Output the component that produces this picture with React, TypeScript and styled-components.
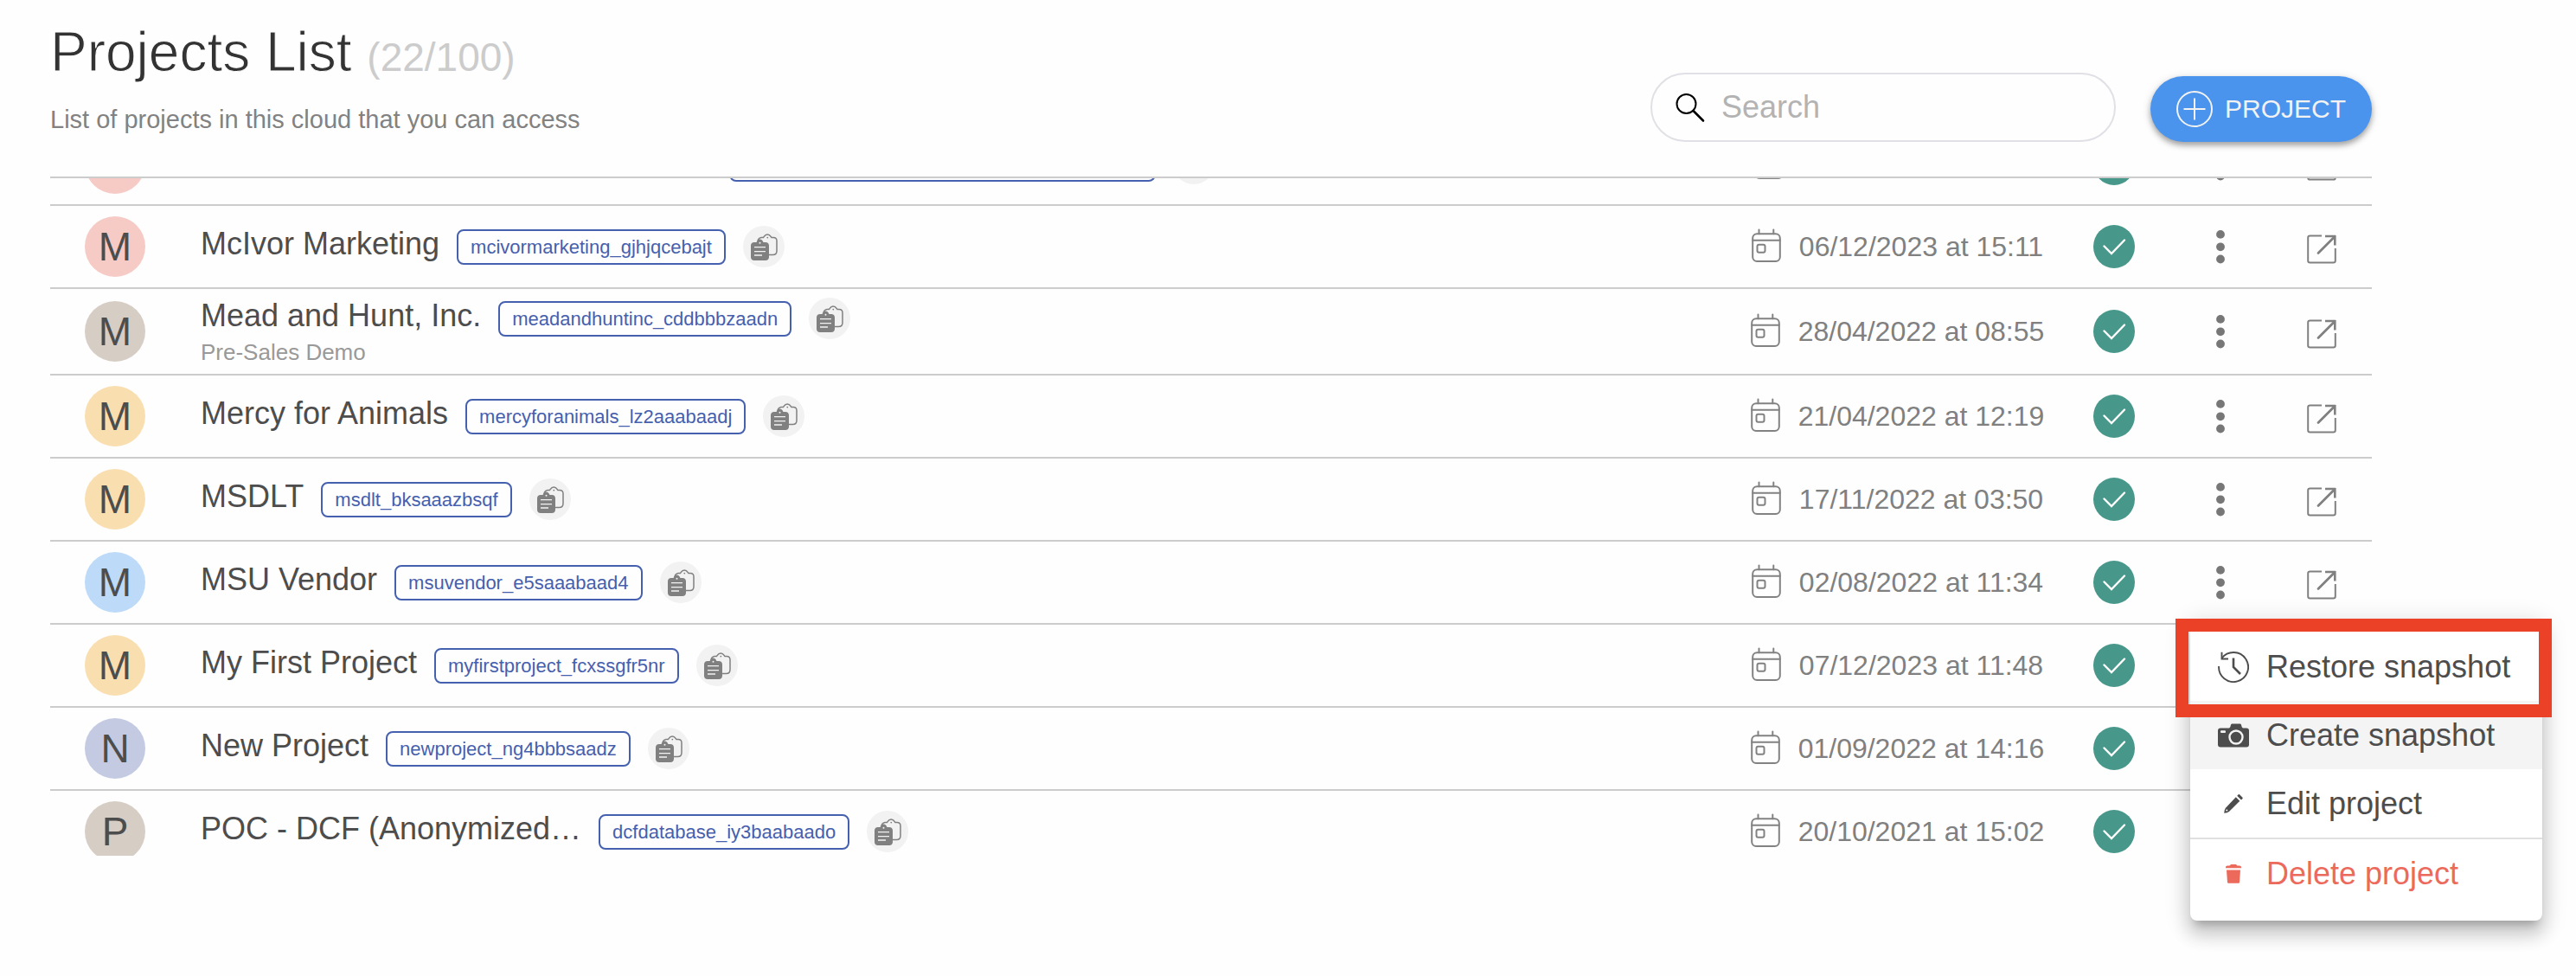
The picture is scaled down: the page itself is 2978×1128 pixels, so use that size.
import React, { useLayoutEffect, useRef } from "react";
import styled, { createGlobalStyle } from "styled-components";

const GlobalStyle = createGlobalStyle`
  *, *::before, *::after { box-sizing: border-box; }
  body {
    margin: 0;
    background: #fefefe;
    color: #4d4d4d;
    font-family: "Liberation Sans", Arial, Helvetica, sans-serif;
  }
  button, input { font: inherit; }
  svg { display: block; }
`;

const Page = styled.main`
  position: relative;
  min-height: 100vh;
  padding: 22px 236px 0 58px;
`;

const Header = styled.header`
  display: flex;
  align-items: flex-end;
  justify-content: space-between;
  padding-bottom: 40px;
`;

const Heading = styled.div`
  display: flex;
  flex-direction: column;
  gap: 14px;
`;

const Title = styled.h1`
  margin: 0;
  color: #333;
  font-size: 64px;
  font-weight: 400;
  line-height: 76px;
  -webkit-text-stroke: 1px #fefefe;
`;

const Count = styled.span`
  color: #ccc;
  font-size: 46px;
  line-height: 1;
  -webkit-text-stroke: 0;
`;

const Subtitle = styled.p`
  margin: 0;
  color: #828282;
  font-size: 29px;
  line-height: 52px;
`;

const Controls = styled.div`
  display: flex;
  align-items: flex-end;
  gap: 40px;
`;

const SearchBox = styled.label`
  display: flex;
  align-items: center;
  gap: 18px;
  width: 538px;
  height: 80px;
  padding: 0 26px;
  border: 2px solid #e0e0e6;
  border-radius: 40px;
`;

const SearchInput = styled.input`
  flex: 1;
  min-width: 0;
  padding: 0;
  border: 0;
  outline: 0;
  background: transparent;
  color: #4d4d4d;
  font-size: 36px;
  line-height: 44px;
  &::placeholder { color: #b3b3b3; opacity: 1; }
`;

const NewProjectButton = styled.button`
  display: flex;
  align-items: center;
  gap: 14px;
  height: 76px;
  padding: 0 30px;
  border: 0;
  border-radius: 38px;
  background: #4a94ee;
  color: #f2f2f2;
  font-size: 30px;
  box-shadow: 0 4px 6px rgba(0, 0, 0, 0.3), 0 2px 12px rgba(0, 0, 0, 0.12);
  cursor: pointer;
`;

const ListViewport = styled.div`
  height: calc(100vh - 343px);
  min-height: 200px;
  border-top: 2px solid #ccc;
  overflow-y: auto;
  scrollbar-width: none;
`;

const Table = styled.table`
  width: 100%;
  table-layout: fixed;
  border-collapse: separate;
  border-spacing: 0;
`;

const Col = styled.col<{ $width?: number }>`
  width: ${(p) => (p.$width ? `${p.$width}px` : "auto")};
`;

const Cell = styled.td`
  padding: 0;
  border-bottom: 2px solid #ccc;
  vertical-align: middle;
`;

const AvatarCell = styled(Cell)`
  padding: 12px 0 12px 40px;
`;

const NameCell = styled(Cell)`
  padding: 10px 0;
`;

const Avatar = styled.div<{ $color: string }>`
  display: flex;
  align-items: center;
  justify-content: center;
  width: 70px;
  height: 70px;
  border-radius: 50%;
  background: ${(p) => p.$color};
  font-size: 46px;
`;

const NameLine = styled.div`
  display: flex;
  align-items: center;
  gap: 20px;
  height: 48px;
`;

const Name = styled.span<{ $width?: number }>`
  width: ${(p) => (p.$width ? `${p.$width}px` : "auto")};
  padding-bottom: 7px;
  font-size: 36px;
  line-height: 41px;
  white-space: nowrap;
`;

const Chip = styled.code<{ $width?: number }>`
  display: flex;
  align-items: center;
  width: ${(p) => (p.$width ? `${p.$width}px` : "auto")};
  height: 41px;
  margin-top: 1px;
  padding: 0 14px;
  border: 2px solid #4560ae;
  border-radius: 8px;
  color: #4560ae;
  font-family: inherit;
  font-size: 22px;
  white-space: nowrap;
`;

const CopyButton = styled.button`
  width: 48px;
  height: 48px;
  padding: 0;
  border: 0;
  border-radius: 50%;
  background: #f2f2f2;
  cursor: pointer;
`;

const Description = styled.div`
  color: #999;
  font-size: 26px;
  line-height: 30px;
`;

const DateGroup = styled.div`
  display: flex;
  align-items: center;
  justify-content: center;
  gap: 21px;
  color: #808080;
`;

const DateText = styled.time`
  min-width: 276px;
  font-size: 32px;
  line-height: 38px;
  white-space: nowrap;
`;

const Center = styled.div`
  display: flex;
  justify-content: center;
`;

const KebabButton = styled.button`
  padding: 0;
  border: 0;
  background: transparent;
  cursor: pointer;
`;

const OpenLink = styled.a`
  padding-top: 6px;
`;

const Menu = styled.div`
  position: absolute;
  top: 715px;
  right: 39px;
  width: 407px;
  padding: 16px 0 15px;
  border-radius: 8px;
  background: #fff;
  box-shadow: 0 10px 10px -6px rgba(0, 0, 0, 0.2),
    0 16px 20px 2px rgba(0, 0, 0, 0.14), 0 6px 28px 4px rgba(0, 0, 0, 0.12);
`;

const MenuItem = styled.button<{ $active?: boolean; $danger?: boolean }>`
  display: flex;
  align-items: center;
  gap: 20px;
  width: 100%;
  height: 79px;
  padding: 0 32px;
  border: 0;
  background: ${(p) => (p.$active ? "#f4f4f4" : "transparent")};
  color: ${(p) => (p.$danger ? "#ec6a5c" : "#4d4d4d")};
  font-size: 36px;
  text-align: left;
  white-space: nowrap;
  cursor: pointer;
`;

const MenuDivider = styled.hr`
  height: 2px;
  margin: 0;
  border: 0;
  background: #e0e0e0;
`;

const Callout = styled.div`
  position: absolute;
  top: 0;
  right: -11px;
  left: -17px;
  height: 114px;
  border: 15px solid #ea4127;
  pointer-events: none;
`;

const SearchIcon = () => (
  <svg width="36" height="36" viewBox="0 0 36 36" fill="none" stroke="#000" strokeLinecap="round" aria-hidden>
    <circle cx="13.5" cy="14" r="11" strokeWidth="2" />
    <path d="M21.5 22 33 33.5" strokeWidth="2.6" />
  </svg>
);

const PlusIcon = () => (
  <svg width="42" height="42" viewBox="0 0 42 42" fill="none" stroke="#f2f2f2" strokeWidth="2" aria-hidden>
    <circle cx="21" cy="21" r="20" />
    <path d="M21 8.5v25M8.5 21h25" />
  </svg>
);

const CopyIcon = () => (
  <svg width="48" height="48" viewBox="0 0 48 48" aria-hidden>
    <path
      d="M17 18.500c0-3 1.500-4.500 4-5h2.500c1-.5 1.200-3.500 4.700-3.500s3.700 3 4.700 3.500H35c2.500 0 4 1.500 4 4V29c0 3-1.500 4.500-4.500 4.500H30"
      fill="none"
      stroke="#808080"
      strokeWidth="1.5"
    />
    <circle cx="28.300" cy="13.600" r=".9" fill="#808080" />
    <path
      d="M13 19h2.500c1-2 2-3.500 4-3.500s3 1.500 4 3.500H26c2.500 0 4 1.500 4 4v13c0 2.500-1.500 4-4 4H13c-2.500 0-4-1.500-4-4V23c0-2.500 1.500-4 4-4z"
      fill="#808080"
    />
    <circle cx="19.500" cy="19.800" r="1" fill="#f2f2f2" />
    <path d="M13 24.700h13M13 29.700h13M13 34h9" stroke="#f2f2f2" strokeWidth="1.300" />
  </svg>
);

const CalendarIcon = () => (
  <svg width="34" height="42" viewBox="0 0 34 42" fill="none" stroke="#828282" strokeWidth="2" strokeLinecap="round" aria-hidden>
    <rect x="1.200" y="6.300" width="31.600" height="31.700" rx="5" />
    <path d="M1.200 13.700h31.600M8.500 1.500v4.800M25.300 1.500v4.800" />
    <rect x="6.500" y="18.800" width="9" height="9" rx="2" />
  </svg>
);

const StatusIcon = () => (
  <svg width="48" height="50" viewBox="0 0 48 50" role="img" aria-label="Active">
    <ellipse cx="24" cy="25" rx="24" ry="25" fill="#47988a" />
    <path d="m12.500 24.500 8.500 8.500L36 17.500" fill="none" stroke="#fff" strokeWidth="2.400" strokeLinecap="round" strokeLinejoin="miter" />
  </svg>
);

const KebabIcon = () => (
  <svg width="10" height="40" viewBox="0 0 10 40" fill="#777" aria-hidden>
    <circle cx="5" cy="5.900" r="4.900" />
    <circle cx="5" cy="20.300" r="4.900" />
    <circle cx="5" cy="34.500" r="4.900" />
  </svg>
);

const OpenIcon = () => (
  <svg width="34" height="34" viewBox="0 0 34 34" fill="none" stroke="#808080" strokeWidth="2" aria-hidden>
    <path d="M17 1.500H3.500c-1.500 0-2.300.8-2.300 2.300v26.500c0 1.500.8 2.300 2.300 2.300h27c1.500 0 2.300-.8 2.300-2.300V16" />
    <path d="M21 2h12M32.300 1v11.500" strokeWidth="2.600" />
    <path d="M13 21.500 31.500 3" strokeWidth="2.800" strokeLinecap="round" />
  </svg>
);

const HistoryIcon = () => (
  <svg width="36" height="36" viewBox="0 0 36 36" fill="none" stroke="currentColor" aria-hidden>
    <path d="M1.100 17A17 17 0 1 0 4.500 7.800" strokeWidth="1.900" />
    <path d="M4.500.8v7.700H12" strokeWidth="1.900" />
    <path d="M18 7.500V18l8 8" strokeWidth="2.600" />
  </svg>
);

const CameraIcon = () => (
  <svg width="36" height="28" viewBox="0 0 36 28" aria-hidden>
    <path
      d="M3 5.500h9.500c1.500 0 2-1.500 2.300-3C15 1 15.500.5 17 .5h8c1.500 0 2 .5 2.200 2 .3 1.500.8 3 2.300 3H33c2 0 3 1 3 3v16c0 2-1 3-3 3H3c-2 0-3-1-3-3v-16c0-2 1-3 3-3z"
      fill="currentColor"
    />
    <circle cx="21" cy="16" r="7.500" fill="none" stroke="#f4f4f4" strokeWidth="2.400" />
    <rect x="3" y="8.300" width="6" height="2.600" rx="1" fill="#f4f4f4" />
  </svg>
);

const PencilIcon = () => (
  <svg width="36" height="36" viewBox="0 0 36 36" fill="currentColor" aria-hidden>
    <path d="m20.800 10.200 4.500 4.500L13.200 26.800c-1.500 1.300-3.300 1.800-6 1.900.2-2.700.8-4.800 2-6.300z" />
    <path d="m22.200 8.800 1.300-1.300c.6-.6 1.200-.6 1.800 0l3 3c.6.6.6 1.200 0 1.800L27 13.500z" />
    <circle cx="10.300" cy="25.600" r="1" fill="#fff" />
  </svg>
);

const TrashIcon = () => (
  <svg width="36" height="36" viewBox="0 0 36 36" fill="currentColor" aria-hidden>
    <path d="M9 10.500c0-1.300.8-2 2-2h2.500l1.500-1.500h6l1.500 1.500H25c1.200 0 2 .7 2 2v.7H9z" />
    <path d="M10 13.500h16l-1 14c-.1 1-.6 1.300-1.400 1.300H12.400c-.8 0-1.300-.4-1.400-1.300z" />
  </svg>
);

interface Project {
  initial: string;
  color: string;
  name: string;
  slug: string;
  date: string;
  description?: string;
  nameWidth?: number;
  slugWidth?: number;
}

const PINK = "#f6cbc6";
const TAUPE = "#d6cdc5";
const AMBER = "#f9dfb0";
const SKY = "#bddaf8";
const LAVENDER = "#c3cae2";

const projects: Project[] = [
  { initial: "", color: PINK, name: "", slug: "", date: "", nameWidth: 591, slugWidth: 493 },
  { initial: "M", color: PINK, name: "McIvor Marketing", slug: "mcivormarketing_gjhjqcebajt", date: "06/12/2023 at 15:11" },
  { initial: "M", color: TAUPE, name: "Mead and Hunt, Inc.", slug: "meadandhuntinc_cddbbbzaadn", date: "28/04/2022 at 08:55", description: "Pre-Sales Demo" },
  { initial: "M", color: AMBER, name: "Mercy for Animals", slug: "mercyforanimals_lz2aaabaadj", date: "21/04/2022 at 12:19" },
  { initial: "M", color: AMBER, name: "MSDLT", slug: "msdlt_bksaaazbsqf", date: "17/11/2022 at 03:50" },
  { initial: "M", color: SKY, name: "MSU Vendor", slug: "msuvendor_e5saaabaad4", date: "02/08/2022 at 11:34" },
  { initial: "M", color: AMBER, name: "My First Project", slug: "myfirstproject_fcxssgfr5nr", date: "07/12/2023 at 11:48" },
  { initial: "N", color: LAVENDER, name: "New Project", slug: "newproject_ng4bbbsaadz", date: "01/09/2022 at 14:16" },
  { initial: "P", color: TAUPE, name: "POC - DCF (Anonymized…", slug: "dcfdatabase_iy3baabaado", date: "20/10/2021 at 15:02" },
];

const ProjectRow = ({ project }: { project: Project }) => (
  <tr>
    <AvatarCell>
      <Avatar $color={project.color}>{project.initial}</Avatar>
    </AvatarCell>
    <NameCell>
      <NameLine>
        <Name $width={project.nameWidth}>{project.name}</Name>
        <Chip $width={project.slugWidth}>{project.slug}</Chip>
        <CopyButton type="button" aria-label="Copy project id">
          <CopyIcon />
        </CopyButton>
      </NameLine>
      {project.description && <Description>{project.description}</Description>}
    </NameCell>
    <Cell>
      <DateGroup>
        <CalendarIcon />
        <DateText>{project.date}</DateText>
      </DateGroup>
    </Cell>
    <Cell>
      <Center>
        <StatusIcon />
      </Center>
    </Cell>
    <Cell>
      <Center>
        <KebabButton type="button" aria-label="Project actions">
          <KebabIcon />
        </KebabButton>
      </Center>
    </Cell>
    <Cell>
      <Center>
        <OpenLink href="#open" aria-label="Open project">
          <OpenIcon />
        </OpenLink>
      </Center>
    </Cell>
  </tr>
);

export default function App() {
  const viewport = useRef<HTMLDivElement>(null);

  useLayoutEffect(() => {
    if (viewport.current) viewport.current.scrollTop = 64;
  }, []);

  return (
    <>
      <GlobalStyle />
      <Page>
        <Header>
          <Heading>
            <Title>
              Projects List <Count>(22/100)</Count>
            </Title>
            <Subtitle>List of projects in this cloud that you can access</Subtitle>
          </Heading>
          <Controls>
            <SearchBox>
              <SearchIcon />
              <SearchInput type="search" placeholder="Search" aria-label="Search" />
            </SearchBox>
            <NewProjectButton type="button">
              <PlusIcon />
              PROJECT
            </NewProjectButton>
          </Controls>
        </Header>

        <ListViewport ref={viewport}>
          <Table>
            <colgroup>
              <Col $width={174} />
              <Col />
              <Col $width={373} />
              <Col $width={128} />
              <Col $width={118} />
              <Col $width={116} />
            </colgroup>
            <tbody>
              {projects.map((project, index) => (
                <ProjectRow key={index} project={project} />
              ))}
            </tbody>
          </Table>
        </ListViewport>

        <Menu role="menu">
          <MenuItem type="button" role="menuitem">
            <HistoryIcon />
            Restore snapshot
          </MenuItem>
          <MenuItem type="button" role="menuitem" $active>
            <CameraIcon />
            Create snapshot
          </MenuItem>
          <MenuItem type="button" role="menuitem">
            <PencilIcon />
            Edit project
          </MenuItem>
          <MenuDivider />
          <MenuItem type="button" role="menuitem" $danger>
            <TrashIcon />
            Delete project
          </MenuItem>
          <Callout />
        </Menu>
      </Page>
    </>
  );
}
